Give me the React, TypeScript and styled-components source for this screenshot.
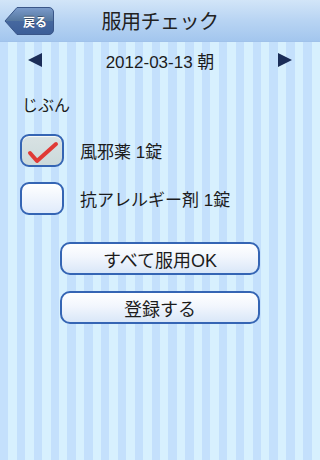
import React, { useState } from "react";
import styled, { createGlobalStyle } from "styled-components";

const GlobalStyle = createGlobalStyle`
  html, body {
    margin: 0;
    padding: 0;
  }
  body {
    font-family: "Liberation Sans", "Noto Sans CJK JP", sans-serif;
    color: #1c1c1c;
  }
`;

const Screen = styled.div`
  width: 320px;
  height: 460px;
  overflow: hidden;
  display: flex;
  flex-direction: column;
  background: repeating-linear-gradient(
    90deg,
    #c4e0fc 0px,
    #c4e0fc 8.42px,
    #d7f0fe 8.42px,
    #d7f0fe 16.84px
  );
`;

const NavBar = styled.header`
  height: 41px;
  flex-shrink: 0;
  display: grid;
  grid-template-columns: 1fr auto 1fr;
  align-items: center;
  padding: 0 4px;
  background: linear-gradient(#d2e5f8, #b8d4f3 50%, #a3c6ee);
  border-bottom: 1px solid #a0c2ea;
`;

const BackButton = styled.button`
  position: relative;
  width: 50px;
  height: 28px;
  margin-top: 1px;
  padding: 0 0 0 12px;
  border: none;
  background: none;
  justify-self: start;
  color: #fff;
  font-family: "Noto Sans CJK JP", sans-serif;
  font-size: 12px;
  font-weight: 700;
  text-shadow: 0 -1px 0 rgba(0, 0, 0, 0.4);
  cursor: pointer;

  svg {
    position: absolute;
    left: 0;
    top: 0;
  }
  span {
    position: relative;
  }
`;

const Title = styled.h1`
  margin: 0;
  font-family: "Noto Sans CJK JP", sans-serif;
  font-size: 20px;
  font-weight: 400;
  letter-spacing: -0.5px;
  color: #222;
`;

const DateRow = styled.div`
  height: 36px;
  display: flex;
  align-items: center;
  justify-content: space-between;
  padding: 0 28px;
`;

const Arrow = styled.button`
  width: 14px;
  height: 14px;
  padding: 0;
  border: none;
  background: none;
  display: flex;
  cursor: pointer;
`;

const DateText = styled.div`
  font-size: 17px;
  color: #1c1c1c;
`;

const Body = styled.div`
  display: flex;
  flex-direction: column;
  padding: 14px 20px 0;
`;

const Person = styled.div`
  font-family: "Noto Sans CJK JP", sans-serif;
  font-size: 16px;
  margin-left: 2px;
  line-height: 24px;
`;

const MedList = styled.div`
  display: flex;
  flex-direction: column;
  gap: 15px;
  margin-top: 18px;
`;

const MedRow = styled.label`
  display: flex;
  align-items: center;
  gap: 16px;
  cursor: pointer;
`;

const Box = styled.span<{ $checked: boolean }>`
  position: relative;
  width: 44px;
  height: 33px;
  box-sizing: border-box;
  border: 2px solid #3565b4;
  border-radius: 9px;
  background: ${(p) =>
    p.$checked ? "linear-gradient(#d8e2e3, #ccdadb)" : "linear-gradient(#ffffff, #e0ebfb)"};
  box-shadow: inset 0 1px 1px rgba(255, 255, 255, 0.8);

  svg {
    position: absolute;
    left: 3px;
    top: 3px;
  }
`;

const MedLabel = styled.span`
  font-size: 17px;
  color: #1c1c1c;
`;

const Actions = styled.div`
  display: flex;
  flex-direction: column;
  align-items: center;
  gap: 16px;
  margin-top: 27px;
`;

const ActionButton = styled.button`
  width: 200px;
  height: 33px;
  box-sizing: border-box;
  border: 2px solid #3565b4;
  border-radius: 10px;
  background: linear-gradient(#ffffff, #f2f6fd 45%, #d9e7f8);
  font-family: "Liberation Sans", "Noto Sans CJK JP", sans-serif;
  font-size: 18px;
  color: #1c1c1c;
  padding: 0;
  cursor: pointer;
`;

const meds = [
  { id: 1, name: "風邪薬 1錠", taken: true },
  { id: 2, name: "抗アレルギー剤 1錠", taken: false },
];

export default function App() {
  const [taken, setTaken] = useState<Record<number, boolean>>(
    Object.fromEntries(meds.map((m) => [m.id, m.taken]))
  );

  const toggle = (id: number) => setTaken((t) => ({ ...t, [id]: !t[id] }));

  return (
    <Screen>
      <GlobalStyle />
      <NavBar>
        <BackButton>
          <svg width="50" height="28" viewBox="0 0 50 28">
            <defs>
              <linearGradient id="back" x1="0" y1="0" x2="0" y2="1">
                <stop offset="0" stopColor="#7b9bcb" />
                <stop offset="0.5" stopColor="#55779f" />
                <stop offset="0.5" stopColor="#46689f" />
                <stop offset="1" stopColor="#3c5e98" />
              </linearGradient>
            </defs>
            <path
              d="M13 0.5 H45 A4.5 4.5 0 0 1 49.5 5 V23 A4.5 4.5 0 0 1 45 27.5 H13 L1 14 Z"
              fill="url(#back)"
              stroke="#3a5688"
              strokeWidth="1"
              strokeLinejoin="round"
            />
          </svg>
          <span>戻る</span>
        </BackButton>
        <Title>服用チェック</Title>
        <div />
      </NavBar>

      <DateRow>
        <Arrow aria-label="前へ">
          <svg width="14" height="14" viewBox="0 0 14 14">
            <path d="M0 7 L14 0 V14 Z" fill="#1b2d58" />
          </svg>
        </Arrow>
        <DateText>2012-03-13 朝</DateText>
        <Arrow aria-label="次へ">
          <svg width="14" height="14" viewBox="0 0 14 14">
            <path d="M14 7 L0 0 V14 Z" fill="#1b2d58" />
          </svg>
        </Arrow>
      </DateRow>

      <Body>
        <Person>じぶん</Person>
        <MedList>
          {meds.map((m) => (
            <MedRow key={m.id} onClick={() => toggle(m.id)}>
              <Box $checked={taken[m.id]}>
                {taken[m.id] && (
                  <svg width="36" height="26" viewBox="0 0 36 26">
                    <path
                      d="M5 14 L12 22 L31 5"
                      fill="none"
                      stroke="#e03a36"
                      strokeWidth="4"
                      strokeLinecap="round"
                      strokeLinejoin="round"
                    />
                  </svg>
                )}
              </Box>
              <MedLabel>{m.name}</MedLabel>
            </MedRow>
          ))}
        </MedList>
        <Actions>
          <ActionButton>すべて服用OK</ActionButton>
          <ActionButton>登録する</ActionButton>
        </Actions>
      </Body>
    </Screen>
  );
}
